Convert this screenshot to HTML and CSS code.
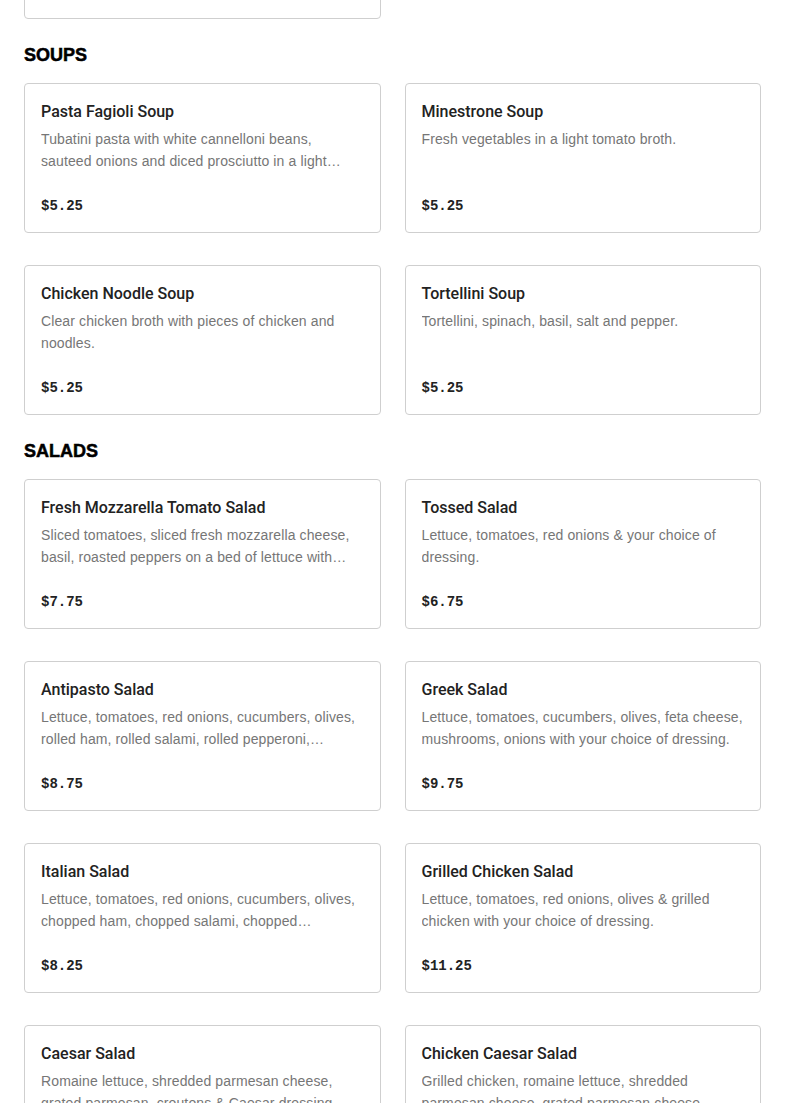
FILE: index.html
```html
<!DOCTYPE html>
<html lang="en">
<head>
<meta charset="utf-8">
<title>Menu</title>
<link rel="stylesheet" href="styles.css">
</head>
<body>
<main class="menu">
  <section class="section section-prev">
    <div class="grid">
      <article class="card">
        <h3 class="item-title">Garlic Bread</h3>
        <p class="item-desc">Fresh baked bread with garlic butter.</p>
        <div class="item-price">$4.25</div>
      </article>
    </div>
  </section>

  <section class="section">
    <h2 class="section-title">SOUPS</h2>
    <div class="grid">
      <article class="card">
        <h3 class="item-title">Pasta Fagioli Soup</h3>
        <p class="item-desc">Tubatini pasta with white cannelloni beans, sauteed onions and diced prosciutto in a light tomato broth.</p>
        <div class="item-price">$5.25</div>
      </article>
      <article class="card">
        <h3 class="item-title">Minestrone Soup</h3>
        <p class="item-desc">Fresh vegetables in a light tomato broth.</p>
        <div class="item-price">$5.25</div>
      </article>
      <article class="card">
        <h3 class="item-title">Chicken Noodle Soup</h3>
        <p class="item-desc">Clear chicken broth with pieces of chicken and noodles.</p>
        <div class="item-price">$5.25</div>
      </article>
      <article class="card">
        <h3 class="item-title">Tortellini Soup</h3>
        <p class="item-desc">Tortellini, spinach, basil, salt and pepper.</p>
        <div class="item-price">$5.25</div>
      </article>
    </div>
  </section>

  <section class="section">
    <h2 class="section-title">SALADS</h2>
    <div class="grid">
      <article class="card">
        <h3 class="item-title">Fresh Mozzarella Tomato Salad</h3>
        <p class="item-desc">Sliced tomatoes, sliced fresh mozzarella cheese, basil, roasted peppers on a bed of lettuce with balsamic vinaigrette.</p>
        <div class="item-price">$7.75</div>
      </article>
      <article class="card">
        <h3 class="item-title">Tossed Salad</h3>
        <p class="item-desc">Lettuce, tomatoes, red onions &amp; your choice of dressing.</p>
        <div class="item-price">$6.75</div>
      </article>
      <article class="card">
        <h3 class="item-title">Antipasto Salad</h3>
        <p class="item-desc">Lettuce, tomatoes, red onions, cucumbers, olives, rolled ham, rolled salami, rolled pepperoni, provolone cheese with your choice of dressing.</p>
        <div class="item-price">$8.75</div>
      </article>
      <article class="card">
        <h3 class="item-title">Greek Salad</h3>
        <p class="item-desc">Lettuce, tomatoes, cucumbers, olives, feta cheese, mushrooms, onions with your choice of dressing.</p>
        <div class="item-price">$9.75</div>
      </article>
      <article class="card">
        <h3 class="item-title">Italian Salad</h3>
        <p class="item-desc">Lettuce, tomatoes, red onions, cucumbers, olives, chopped ham, chopped salami, chopped pepperoni, provolone cheese with your choice of dressing.</p>
        <div class="item-price">$8.25</div>
      </article>
      <article class="card">
        <h3 class="item-title">Grilled Chicken Salad</h3>
        <p class="item-desc">Lettuce, tomatoes, red onions, olives &amp; grilled chicken with your choice of dressing.</p>
        <div class="item-price">$11.25</div>
      </article>
      <article class="card">
        <h3 class="item-title">Caesar Salad</h3>
        <p class="item-desc">Romaine lettuce, shredded parmesan cheese, grated parmesan, croutons &amp; Caesar dressing.</p>
        <div class="item-price">$8.25</div>
      </article>
      <article class="card">
        <h3 class="item-title">Chicken Caesar Salad</h3>
        <p class="item-desc">Grilled chicken, romaine lettuce, shredded parmesan cheese, grated parmesan cheese, croutons &amp; Caesar dressing.</p>
        <div class="item-price">$11.25</div>
      </article>
    </div>
  </section>
</main>
</body>
</html>
```

FILE: styles.css
```css
html, body {
  margin: 0;
  padding: 0;
  background: #ffffff;
}

body {
  font-family: "Liberation Sans", Arial, sans-serif;
  color: #222222;
  overflow: hidden;
}

.menu {
  padding: 0 24px;
  display: flex;
  flex-direction: column;
}

.section-prev {
  margin-top: -131px;
}

.section-title {
  margin: 24px 0 16px;
  font-family: "Liberation Sans", Arial, sans-serif;
  font-weight: 900;
  font-size: 18px;
  line-height: 24px;
  color: #000000;
  -webkit-text-stroke: 0.5px #000000;
}

.grid {
  display: grid;
  grid-template-columns: 1fr 1fr;
  column-gap: 24px;
  row-gap: 32px;
}

.card {
  border: 1px solid #cfcfcf;
  border-radius: 4px;
  padding: 16px;
  display: flex;
  flex-direction: column;
  background: #fff;
}

.item-title {
  margin: 0;
  font-family: Roboto, "Liberation Sans", Arial, sans-serif;
  font-size: 16px;
  line-height: 24px;
  font-weight: 500;
  color: #222222;
}

.item-desc {
  margin: 4px 0 0;
  font-family: "Liberation Sans", Arial, sans-serif;
  font-size: 14px;
  line-height: 22px;
  letter-spacing: 0.12px;
  color: #767676;
  height: 44px;
  display: -webkit-box;
  -webkit-line-clamp: 2;
  -webkit-box-orient: vertical;
  overflow: hidden;
}

.item-price {
  margin-top: 24px;
  font-family: "Liberation Mono", "Courier New", monospace;
  font-weight: 700;
  font-size: 14px;
  line-height: 20px;
  color: #222222;
}
```
